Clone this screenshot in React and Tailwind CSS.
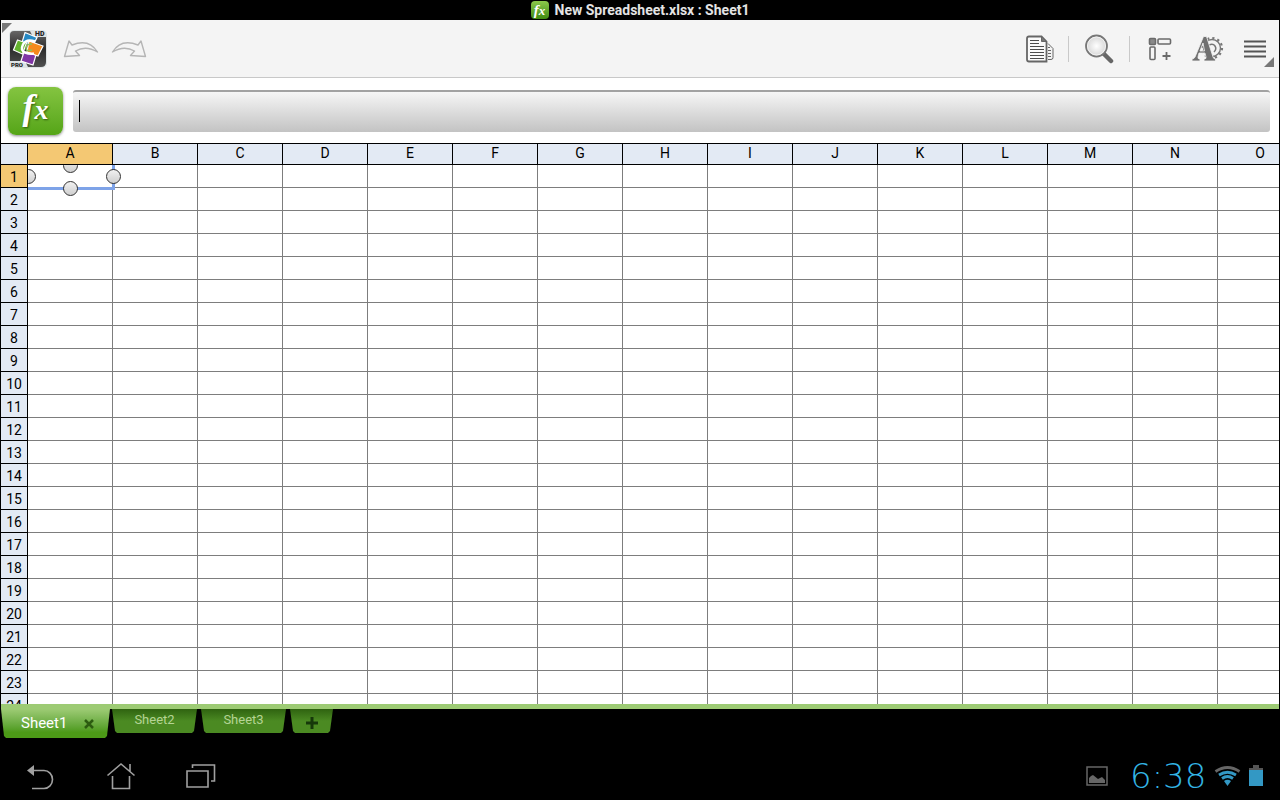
import React from "react";

const COLUMNS = "ABCDEFGHIJKLMNO".split("");
const ROWS = Array.from({ length: 24 }, (_, i) => i + 1);

function FxGlyph({ small }) {
  return (
    <span className="font-['Liberation_Serif',serif] font-bold italic text-white">
      <span className={small ? "text-[15px]" : "text-[36px]"}>f</span>
      <span className={small ? "text-[13px]" : "text-[28px]"}>x</span>
    </span>
  );
}

function StatusBar() {
  return (
    <header className="flex h-5 shrink-0 items-center justify-center gap-1.5 bg-black text-[#e4e4e4]">
      <span className="flex h-[18px] w-[18px] items-center justify-center rounded bg-linear-to-b from-[#8cc84b] to-[#3f8a0e] leading-4">
        <FxGlyph small />
      </span>
      <h1 className="text-[14px] leading-5 font-bold">New Spreadsheet.xlsx : Sheet1</h1>
    </header>
  );
}

function AppLogo() {
  return (
    <svg width="40" height="40" viewBox="0 0 40 40">
      <defs>
        <linearGradient id="logoBg" x1="0" y1="0" x2="0" y2="1">
          <stop offset="0" stopColor="#666" />
          <stop offset="0.5" stopColor="#2c2c2c" />
          <stop offset="1" stopColor="#505050" />
        </linearGradient>
      </defs>
      <rect x="1" y="1" width="38" height="38" rx="5" fill="#dde3e4" />
      <path d="M6 2h16l3 6h13v25q0 5-5 5H20l-3-6H2V6q0-4 4-4z" fill="url(#logoBg)" />
      <g stroke="#fff" strokeWidth="1.2">
        <path d="M17 3.500l12 5-3 6-12-1z" fill="#2589c4" />
        <path d="M9.500 11l9 3-4 11-9-4z" fill="#64b32e" />
        <path d="M16 23l12 3-3 10-12-4z" fill="#8036a5" />
        <path d="M21 12l14 5-5 10-11-4z" fill="#f58a1c" />
      </g>
      <path d="M27 12.500q-9-3-12 3t2 8 9 1" fill="none" stroke="#fff" strokeWidth="2.500" />
      <path d="M24 15q-6 0-6 4t6 2" fill="none" stroke="#8fc25c" strokeWidth="1.500" />
      <text x="27" y="6.500" fontSize="7" fontWeight="900" fill="#222">HD</text>
      <text x="3" y="37.500" fontSize="6" fontWeight="900" fill="#222">PRO</text>
    </svg>
  );
}

function UndoIcon({ flip }) {
  return (
    <svg width="36" height="20" viewBox="0 0 36 20" className={flip ? "-scale-x-100" : ""}>
      <path
        d="M6 2L1.500 17.500l15-1-4-4.500Q23 6 34.500 13 26-1 9 6z"
        fill="#f4f4f4"
        stroke="#b5b5b5"
        strokeWidth="1.4"
        strokeLinejoin="round"
      />
    </svg>
  );
}

function PagesIcon() {
  return (
    <svg width="28" height="28" viewBox="0 0 28 28" fill="none" stroke="#666">
      <path d="M3 1.500h12.500l5 5v20H3q-2 0-2-2v-21q0-2 2-2z" strokeWidth="1.800" fill="#fafafa" />
      <path d="M15.500 1.500v5h5z" fill="#777" />
      <path d="M4 5.500h9M4 8.500h9M4 11.500h14M4 14.500h14M4 17.500h14M4 20.500h14M4 23.500h14" stroke="#4c4c4c" />
      <path d="M22 8.500l5 5v9q0 2-2 2h-3M22 12.500h2M22 15.500h3M22 18.500h3M22 21.500h3" />
    </svg>
  );
}

function SearchIcon() {
  return (
    <svg width="30" height="30" viewBox="0 0 30 30">
      <defs>
        <radialGradient id="lens">
          <stop offset="0" stopColor="#fff" />
          <stop offset="1" stopColor="#d5d5d5" />
        </radialGradient>
      </defs>
      <path d="M19 19l8 8" stroke="#666" strokeWidth="4.500" strokeLinecap="round" />
      <circle cx="12.500" cy="12" r="10.500" fill="url(#lens)" stroke="#777" strokeWidth="1.800" />
      <circle cx="12.500" cy="12" r="9" fill="none" stroke="#f2f2f2" />
    </svg>
  );
}

function InsertIcon() {
  return (
    <svg width="24" height="24" viewBox="0 0 24 24" fill="none" stroke="#6a6a6a" strokeWidth="1.600">
      <rect x="1.500" y="1.500" width="6" height="6" rx="1" fill="#888" />
      <rect x="10" y="2" width="12.500" height="5" rx="1" />
      <rect x="2" y="10" width="5" height="12.500" rx="1" />
      <path d="M18.500 15v8M14.500 19h8" strokeWidth="1.800" />
    </svg>
  );
}

function FormatIcon() {
  return (
    <svg width="32" height="26" viewBox="0 0 32 26">
      <circle cx="20" cy="12" r="8.500" fill="none" stroke="#777" strokeWidth="1.400" />
      <circle cx="20" cy="12" r="10" fill="none" stroke="#777" strokeWidth="2.200" strokeDasharray="2.200 3.036" />
      <path d="M17 9q4-2 6 1t-1 6" fill="none" stroke="#777" strokeWidth="1.500" />
      <path
        d="M0 25v-2q2 0 3-2L11.500.5h3L21 21q.6 2 2.500 2v2H12v-2q2.500 0 2-2L13 17H7L6 21q-.5 2 2 2v2zM8 15h4.500L11 7z"
        fill="#707070"
        stroke="#f4f4f4"
        strokeWidth="0.800"
        fillRule="evenodd"
      />
    </svg>
  );
}

function Toolbar() {
  return (
    <div className="relative flex h-[58px] shrink-0 items-center border-b border-[#c8c8c8] bg-[#f4f4f4] pr-[13px] pl-[7px]">
      <svg width="10" height="10" viewBox="0 0 10 10" className="absolute top-[3px] left-px">
        <path d="M0 0h10L0 10z" fill="#777" />
      </svg>
      <button aria-label="Home"><AppLogo /></button>
      <button aria-label="Undo" className="ml-[15px]"><UndoIcon /></button>
      <button aria-label="Redo" className="ml-3"><UndoIcon flip /></button>
      <div className="ml-auto flex items-center">
        <button aria-label="Pages"><PagesIcon /></button>
        <span className="mx-3.5 h-[26px] w-px bg-[#c9c9c9]" />
        <button aria-label="Search" className="ml-px"><SearchIcon /></button>
        <span className="mr-[18px] ml-[15px] h-[26px] w-px bg-[#c9c9c9]" />
        <button aria-label="Insert"><InsertIcon /></button>
        <button aria-label="Format" className="ml-5"><FormatIcon /></button>
        <button aria-label="Menu" className="ml-5">
          <svg width="22" height="18" viewBox="0 0 22 18">
            <path d="M0 1.500h22M0 6.500h22M0 11.500h22M0 16.500h22" stroke="#555" strokeWidth="1.800" />
          </svg>
        </button>
      </div>
      <svg width="10" height="10" viewBox="0 0 10 10" className="absolute right-[5px] bottom-2.5">
        <path d="M10 0v10H0z" fill="#777" />
      </svg>
    </div>
  );
}

function FormulaBar() {
  return (
    <div className="flex h-[65px] shrink-0 items-center gap-2.5 bg-white pr-[9px] pl-[7px]">
      <button
        aria-label="Insert function"
        className="flex h-12 w-[55px] items-center justify-center rounded-lg bg-linear-to-b from-[#84c440] to-[#55a516] leading-[44px] shadow-[0_1px_3px_#888] [text-shadow:1px_1px_2px_#2d5c0c]"
      >
        <FxGlyph />
      </button>
      <div className="relative h-[42px] flex-1">
        <input
          aria-label="Formula"
          className="h-full w-full rounded-[3px] border-t-2 border-[#a2a2a2] bg-linear-to-b from-[#f6f6f6] to-[#c3c3c3] px-1.5 text-[16px] outline-none"
        />
        <span className="absolute top-2.5 left-1.5 h-[22px] w-px bg-black" />
      </div>
    </div>
  );
}

function Handle({ className }) {
  return (
    <span
      className={`absolute h-[15px] w-[15px] rounded-full border border-[#333] bg-linear-to-b from-[#f1f1f1] to-[#cfcfcf] ${className}`}
    />
  );
}

function Selection() {
  return (
    <div className="absolute top-0 -right-[3px] -bottom-[3px] left-0 z-10 border-r-3 border-b-3 border-[#7ea3e8]">
      <Handle className="-top-[7px] left-[35px]" />
      <Handle className="top-1 -left-[7px]" />
      <Handle className="top-1 -right-[9px]" />
      <Handle className="-bottom-[9px] left-[35px]" />
    </div>
  );
}

function Grid() {
  return (
    <main className="min-h-0 flex-1 overflow-hidden bg-white">
      <table className="w-[1302px] table-fixed border-separate border-spacing-0 border-t border-black text-center text-[14px] text-black">
        <colgroup>
          <col className="w-[27px]" />
          {COLUMNS.map((c) => (
            <col key={c} className="w-[85px]" />
          ))}
        </colgroup>
        <thead className="relative z-20">
          <tr className="h-[21px]">
            <th aria-label="Select all" className="border-r border-b border-black bg-[#e3eaf4] p-0" />
            {COLUMNS.map((c) => (
              <th
                key={c}
                scope="col"
                className={`border-r border-b border-black p-0 pb-0.5 leading-[18px] font-normal ${c === "A" ? "bg-[#f4c873]" : "bg-[#e3eaf4]"}`}
              >
                {c}
              </th>
            ))}
          </tr>
        </thead>
        <tbody>
          {ROWS.map((r) => (
            <tr key={r} className="h-[23px]">
              <th
                scope="row"
                className={`relative z-20 border-r border-b border-black p-0 pt-0.5 leading-5 font-normal ${r === 1 ? "bg-[#f4c873]" : "bg-[#e3eaf4]"}`}
              >
                {r}
              </th>
              {COLUMNS.map((c) => (
                <td key={c} className="relative border-r border-b border-[#7d7d7d] p-0">
                  {r === 1 && c === "A" && <Selection />}
                </td>
              ))}
            </tr>
          ))}
        </tbody>
      </table>
    </main>
  );
}

const tabShape = "[clip-path:polygon(0_0,100%_0,calc(100%-3px)_calc(100%-2px),calc(100%-5px)_100%,5px_100%,3px_calc(100%-2px))]";

function SheetTabs() {
  const idle = `${tabShape} h-6 bg-linear-to-b from-[#2f6310] to-[#4b8a22] to-50% text-[13px] leading-5 text-[#b5d494]`;

  return (
    <nav aria-label="Sheets" className="flex h-12 shrink-0 items-start border-t-5 border-[#9dcb74] bg-black">
      <div className={`${tabShape} flex h-[29px] w-[109px] items-center justify-between bg-linear-to-b from-[#9dcb74] to-[#4c9a17] to-80% pr-4 pl-5`}>
        <button className="text-[15px] text-white">Sheet1</button>
        <button aria-label="Close Sheet1">
          <svg width="10" height="10" viewBox="0 0 10 10">
            <path d="M1 1l8 8M9 1L1 9" stroke="#2c5c10" strokeWidth="2.500" />
          </svg>
        </button>
      </div>
      <button className={`${idle} ml-0.5 w-[85px] pb-0.5`}>Sheet2</button>
      <button className={`${idle} ml-1 w-[85px] pb-0.5`}>Sheet3</button>
      <button aria-label="Add sheet" className={`${idle} ml-1 flex w-[43px] items-center justify-center pt-1`}>
        <svg width="12" height="12" viewBox="0 0 12 12">
          <path d="M6 0v12M0 6h12" stroke="#16380a" strokeWidth="3" />
        </svg>
      </button>
    </nav>
  );
}

function SystemBar() {
  return (
    <footer className="flex h-12 shrink-0 items-center bg-black pr-[17px] pl-[26px]">
      <button aria-label="Back">
        <svg width="28" height="28" viewBox="0 0 28 28" fill="none" stroke="#a0a0a0" strokeWidth="1.600">
          <path d="M6 8.500h12a8.500 9 0 0 1 0 18H6" />
          <path d="M8 3v11L1 8.500z" fill="#a0a0a0" stroke="none" />
        </svg>
      </button>
      <button aria-label="Home screen" className="ml-[52px]">
        <svg width="30" height="28" viewBox="0 0 30 28" fill="none" stroke="#a0a0a0" strokeWidth="1.600">
          <path d="M1.500 13.500L15 2l13.500 11.500M24 2v8M6.500 14v12.500h17V14" />
        </svg>
      </button>
      <button aria-label="Recent apps" className="ml-[50px]">
        <svg width="30" height="26" viewBox="0 0 30 26" fill="none" stroke="#a0a0a0" strokeWidth="1.600">
          <path d="M1 8h21v16H1zM6.500 5V2h22v16H25" />
        </svg>
      </button>
      <div className="ml-auto flex items-center">
        <svg width="22" height="20" viewBox="0 0 22 20">
          <path d="M1 1h20v18H1z" fill="none" stroke="#666" strokeWidth="1.500" />
          <path d="M3 17v-5l2-2 2-1 5 4 4-2 3 3v3z" fill="#666" />
        </svg>
        <time className="ml-[22px] min-w-20 font-['DejaVu_Sans',sans-serif] text-[34px] leading-[48px] font-extralight text-[#33b5e5]">6:38</time>
        <svg width="27" height="20" viewBox="0 0 27 20" fill="none" strokeWidth="2.800" className="ml-1">
          <path d="M1.500 5.500q12-8 24 0" stroke="#666" />
          <path d="M5 9q8.500-5.500 17 0M8 12.500q5.500-4 11 0" stroke="#3398c4" />
          <path d="M10 15q3.500-2.500 7 0L13.500 20z" fill="#3398c4" />
        </svg>
        <svg width="14" height="22" viewBox="0 0 14 22" className="ml-2">
          <path d="M0 3h4V0h6v3h4v3H0z" fill="#555" />
          <path d="M0 5h14v16H0z" fill="#3398c4" />
        </svg>
      </div>
    </footer>
  );
}

export default function App() {
  return (
    <div className="flex h-screen flex-col overflow-hidden bg-black font-[Roboto,sans-serif]">
      <StatusBar />
      <div className="flex min-h-0 flex-1 flex-col border-x border-black">
        <Toolbar />
        <FormulaBar />
        <Grid />
        <SheetTabs />
      </div>
      <SystemBar />
    </div>
  );
}
